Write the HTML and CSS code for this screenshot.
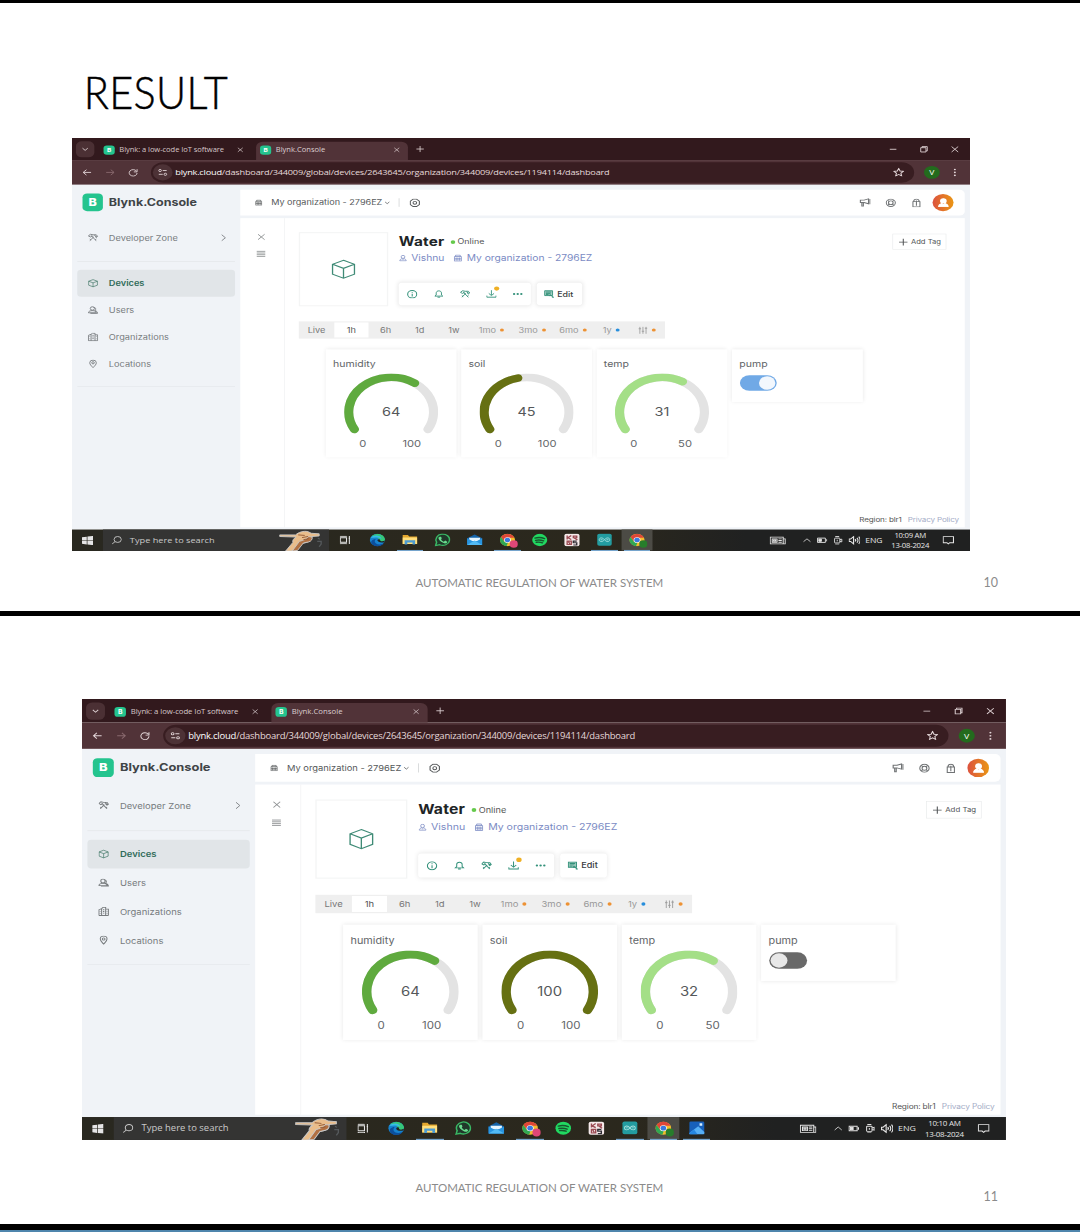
FILE: index.html
```html
<!DOCTYPE html>
<html lang="en">
<head>
<meta charset="utf-8">
<title>Automatic Regulation of Water System</title>
<link rel="stylesheet" href="styles.css">
</head>
<body>
<svg class="sprite" aria-hidden="true">
  <symbol id="down" viewBox="0 0 16 16"><path d="M4 6l4 4 4-4"/></symbol>
  <symbol id="right" viewBox="0 0 16 16"><path d="M5 2l6 6-6 6"/></symbol>
  <symbol id="up" viewBox="0 0 16 16"><path d="M2 11l6-6 6 6"/></symbol>
  <symbol id="close" viewBox="0 0 16 16"><path d="M3 3l10 10M13 3L3 13"/></symbol>
  <symbol id="plus" viewBox="0 0 16 16"><path d="M8 2v12M2 8h12"/></symbol>
  <symbol id="min" viewBox="0 0 16 16"><path d="M3 8h10"/></symbol>
  <symbol id="restore" viewBox="0 0 16 16"><path d="M3 5h8v8H3zM5 5V3h8v8h-2"/></symbol>
  <symbol id="back" viewBox="0 0 16 16"><path d="M14 8H2M7 3L2 8l5 5"/></symbol>
  <symbol id="forward" viewBox="0 0 16 16"><path d="M2 8h12M9 3l5 5-5 5"/></symbol>
  <symbol id="reload" viewBox="0 0 16 16"><path d="M13 5.500A6 6 0 1 0 14 9M14 2v5H9"/></symbol>
  <symbol id="tune" viewBox="0 0 16 16"><path d="M8 4.500h6M2 11.500h6"/><circle cx="4" cy="4.500" r="2"/><circle cx="12" cy="11.500" r="2"/></symbol>
  <symbol id="star" viewBox="0 0 16 16"><path d="M8 1.500l2 4.500 4.800.5-3.600 3.200 1 4.800L8 12l-4.200 2.500 1-4.800L1.200 6.500 6 6z"/></symbol>
  <symbol id="dots" viewBox="0 0 16 16"><g fill="currentColor" stroke="none"><circle cx="8" cy="2.500" r="1.500"/><circle cx="8" cy="8" r="1.500"/><circle cx="8" cy="13.500" r="1.500"/></g></symbol>
  <symbol id="more" viewBox="0 0 16 16"><g fill="currentColor" stroke="none"><circle cx="2.500" cy="8" r="1.800"/><circle cx="8" cy="8" r="1.800"/><circle cx="13.500" cy="8" r="1.800"/></g></symbol>
  <symbol id="tools" viewBox="0 0 16 16"><path d="M1 5l3-3 4 1h5l2 3-2 2-2-2M1 5l3 2 3-2M9 7l-6 7M7 7l6 7M5 4l3 4M10 4l4 3M3 11l2 2M11 13l2-2"/></symbol>
  <symbol id="cube" viewBox="0 0 24 24"><path d="M12 2l10 4.500v11L12 22 2 17.500v-11zM2 6.500L12 11l10-4.500M12 11v11"/></symbol>
  <symbol id="users" viewBox="0 0 16 16"><circle cx="7" cy="5" r="3.200"/><path d="M1 13c0-3 3-4 6-4s6 1 6 4zM9 3c2 0 3 1 3 3s-1 2-1 3c3 1 4 3 4 5H4"/></symbol>
  <symbol id="building" viewBox="0 0 16 16"><path d="M1 15V5l4-2v12M5 3l2-2h4v14M11 4h4v11M1 15h14M7 5h2M7 8h2M7 11h2M13 7v1M13 11v1M3 7v1M3 11v1"/></symbol>
  <symbol id="pin" viewBox="0 0 16 16"><path d="M8 15C5 11 3 9 3 6a5 5 0 0 1 10 0c0 3-2 5-5 9z"/><circle cx="8" cy="6" r="2"/></symbol>
  <symbol id="case" viewBox="0 0 16 16"><path d="M2 5h12v10H2zM4 5V2h8v3M5 7v7M8 7v7M11 7v7M2 10h12"/></symbol>
  <symbol id="gear" viewBox="0 0 16 16"><path d="M5.500 1.500h5L14.500 5v6l-4 3.500h-5L1.500 11V5z"/><circle cx="8" cy="8" r="2.600"/></symbol>
  <symbol id="horn" viewBox="0 0 16 16"><path d="M2 4h5l6-2v8L7 8H2zM4 8v6h2V8M15 2v9"/></symbol>
  <symbol id="ring" viewBox="0 0 16 16"><circle cx="8" cy="8" r="6.500"/><circle cx="8" cy="8" r="3.300"/><path d="M3.500 3.500l2.200 2.200M12.500 3.500l-2.200 2.200M3.500 12.500l2.200-2.200M12.500 12.500l-2.200-2.200"/></symbol>
  <symbol id="gift" viewBox="0 0 16 16"><path d="M3 6h10v9H3zM4 6c0-6 8-6 8 0M8 4v9"/></symbol>
  <symbol id="list" viewBox="0 0 16 16"><path d="M1 3h14M1 6.300h14M1 9.600h14M1 13h14"/></symbol>
  <symbol id="person" viewBox="0 0 16 16"><circle cx="8" cy="5" r="3.500"/><path d="M2 14c0-3 2-4 4-5l2 2 2-2c2 1 4 2 4 5z"/></symbol>
  <symbol id="info" viewBox="0 0 16 16"><circle cx="8" cy="8" r="6.500"/><path d="M8 7v5M8 4v1.500"/></symbol>
  <symbol id="bell" viewBox="0 0 16 16"><path d="M2 12l2-2V6c0-5 8-5 8 0v4l2 2zM6 14h4"/></symbol>
  <symbol id="download" viewBox="0 0 16 16"><path d="M8 1v9M4 7l4 4 4-4M1 11v3h14v-3"/></symbol>
  <symbol id="edit" viewBox="0 0 16 16"><path fill="currentColor" fill-opacity=".45" d="M1 2h12v9H1z"/><path d="M3 4.500h8M3 7h7M3 9h4M9 9l5 5M9 9v3M15 14h-3"/></symbol>
  <symbol id="sliders" viewBox="0 0 16 16"><path d="M3 1v14M8 1v14M13 1v14M1 5h4M6 10h4M11 4h4"/></symbol>
  <symbol id="windows" viewBox="0 0 16 16"><path fill="currentColor" stroke="none" d="M0 2.200L7 1.200v6.300H0zM8 1l8-1v7.500H8zM0 8.500h7v6.300L0 13.800zM8 8.500h8V16l-8-1z"/></symbol>
  <symbol id="search" viewBox="0 0 16 16"><circle cx="9.500" cy="6.500" r="5.500"/><path d="M5.500 10.500L1 15"/></symbol>
  <symbol id="taskview" viewBox="0 0 16 16"><path d="M1 4h9v8H1zM1 1v1M10 1v1M1 14v2M10 14v2M1 1.500h9M1 14.500h9M14 1v14M13 5h2"/></symbol>
  <symbol id="news" viewBox="0 0 24 16"><path d="M1 2h19v12H1zM20 5h3v9h-3M4 5h7v6H4zM13 5h5M13 8h5M13 11h5M6 7h3v2H6z"/></symbol>
  <symbol id="battery" viewBox="0 0 16 16"><path d="M1 4h12v8H1zM15 6v4"/><path fill="currentColor" d="M3 6h4v4H3z"/></symbol>
  <symbol id="meet" viewBox="0 0 16 16"><rect x="3" y="4" width="8" height="9" rx="1"/><path d="M11 7l3-1v5l-3-1M4 1h6M4 15.500h6M7 7v3"/></symbol>
  <symbol id="volume" viewBox="0 0 16 16"><path d="M1 6h2l4-4v12l-4-4H1zM9 6c1 1 1 3 0 4M11.500 4c2 2 2 6 0 8M14 2c2.500 3 2.500 9 0 12"/></symbol>
  <symbol id="note" viewBox="0 0 16 16"><path d="M1 2h14v10h-5l-2 2-2-2H1z"/></symbol>
  <symbol id="hand" viewBox="0 0 70 40"><path fill="#e9bd8b" d="M4 10h24c5-5 12-8 19-6l5 3 12 1v4l-11 1c1 5-3 9-8 11l-7 2-9 14H13l11-16c-1-4 1-7 5-10L4 13z"/><path fill="#b27142" d="M31 39l9-14 8-2c4-1 6-5 5-9l-5-1c-3 5-8 7-14 9L23 40z"/><path fill="none" stroke="#8f5632" d="M32 10l10 1M38 15l9-2M40 19l8-2"/><path fill="none" stroke="#55595c" stroke-width="2" d="M62 16l3 2M61 22h6v5l-3 5"/></symbol>
  <symbol id="edge" viewBox="0 0 24 24"><g stroke="none"><circle cx="12" cy="12" r="11" fill="#1683cf"/><path fill="#36c779" d="M3 6c5-7 18-6 20 4 1 5-5 7-9 4 2-5-4-9-11-8z"/><path fill="#35bbe9" d="M2 8C7 2 17 3 18 10c-5-4-11-2-16-2z"/><path fill="#0c4f9d" d="M10 10c-4 4-1 10 5 10 3 0 5-1 6-2-3 7-13 7-17 1-3-5 1-9 6-9z"/><path fill="#202420" d="M12 12c1-2 4-2 4 0 0 3 4 3 7 1l-1 3c-5 1-10 0-10-4z"/></g></symbol>
  <symbol id="explorer" viewBox="0 0 24 24"><g stroke="none"><path fill="#e3a72e" d="M1 3h8l2 3h12v14H1z"/><path fill="#ffdf7d" d="M1 8h22v12H1z"/><path fill="#4c9bd2" d="M4 13h16v8h-4v-4H8v4H4z"/></g></symbol>
  <symbol id="whatsapp" viewBox="0 0 24 24"><path fill="#20382a" stroke="#39b764" stroke-width="2.200" d="M2 22l1.500-6A10 10 0 1 1 8 20.500z"/><path fill="#6bdc8e" stroke="none" d="M8 6l2 0 1 3-1 2c1 2 2 3 4 4l2-2 3 2c0 3-3 4-6 2-4-2-7-6-7-9z"/></symbol>
  <symbol id="mail" viewBox="0 0 24 24"><g stroke="none"><path fill="#1463a8" d="M1 9L12 2l11 7v12H1z"/><path fill="#e5f5ff" d="M4 8h16v6H4z"/><path fill="#2894df" d="M1 9l11 7 11-7v12H1z"/><path fill="#52baf4" d="M1 21l11-8 11 8z"/></g></symbol>
  <symbol id="chrome" viewBox="0 0 24 24"><g stroke="none"><circle cx="12" cy="12" r="11" fill="#f2bd2d"/><path fill="#df4638" d="M2.500 6.500A11 11 0 0 1 22 8H12L7 14z"/><path fill="#31a853" d="M2.500 6.500l5 8.500 5 2-2 6A11 11 0 0 1 2.500 6.500z"/><circle cx="12" cy="12" r="5" fill="#fff"/><circle cx="12" cy="12" r="4" fill="#3b79df"/></g></symbol>
  <symbol id="spotify" viewBox="0 0 24 24"><circle cx="12" cy="12" r="11" fill="#21d861" stroke="none"/><path fill="none" stroke="#17562e" stroke-width="2.400" stroke-linecap="round" d="M5 8.500c5-1.500 10-1 14 1M6 12.500c4-1 8-.7 11.500 1M7 16c3.500-.7 6-.4 9 1"/></symbol>
  <symbol id="arcade" viewBox="0 0 24 24"><rect x="1" y="1" width="22" height="22" rx="3" fill="#f5eaea" stroke="none"/><path fill="none" stroke="#9a4a52" stroke-width="2" d="M5 4v7M11 4L6 8l5 3M14 5h5v3h-5zM15 8l5 4M5 14h6v6H5zM7 15l2 4"/><path fill="none" stroke="#302d34" stroke-width="2" d="M19 14h-5v3h5v4h-5"/></symbol>
  <symbol id="arduino" viewBox="0 0 24 24"><rect x="1" y="1" width="22" height="22" rx="3" fill="#239ca0" stroke="none"/><path fill="none" stroke="#a2dfdd" stroke-width="1.500" d="M12 12c-3-5-8-4-8 0s5 5 8 0c3-5 8-4 8 0s-5 5-8 0M6 12h3M15 12h3"/></symbol>
  <symbol id="photos" viewBox="0 0 24 24"><g stroke="none"><rect x="1" y="1" width="22" height="22" rx="2" fill="#1760bb"/><path fill="#56aff5" d="M1 21L14 9l9 10v4H1z"/><path fill="#2587e2" d="M8 15l5 8H1v-2z"/><path fill="#d8efff" d="M16 4h4v4h-4z"/></g></symbol>
</svg>

<main class="deck">
  <section class="slide slide-first">
    <h1>RESULT</h1>
    <div class="shot shot-a" data-shot="0"></div>
    <footer><span></span><p>AUTOMATIC REGULATION OF WATER SYSTEM</p><b>10</b></footer>
  </section>
  <section class="slide slide-second">
    <div class="shot shot-b" data-shot="1"></div>
    <footer><span></span><p>AUTOMATIC REGULATION OF WATER SYSTEM</p><b>11</b></footer>
  </section>
</main>
<script src="app.js"></script>
</body>
</html>
```
FILE: styles.css
```css
* { box-sizing: border-box; }
body { margin: 0; background: #fff; }
h1, h2, p { margin: 0; font-weight: 400; }
.sprite { position: absolute; width: 0; height: 0; }
svg { display: block; flex: none; }
.icon { fill: none; stroke: currentColor; stroke-width: 1.5; }

/* Slides */
.deck { width: 1080px; height: 1232px; overflow: hidden; border-bottom: 2px solid #4f86ad; }
.slide { display: flex; flex-direction: column; border-bottom: 5px solid #000; }
.slide-first { height: 616px; border-top: 3px solid #000; }
.slide-second { height: 614px; border-bottom-width: 6px; padding-top: 83px; }
.slide h1 { height: 135px; padding: 62px 0 0 91px; font: 300 45px/54px Lato, sans-serif; letter-spacing: 0.4px; color: #000; transform: scaleX(0.92); transform-origin: 0 0; -webkit-text-stroke: 0.5px #000; }
.shot { overflow: hidden; flex: none; }
.shot-a { width: 898px; height: 413px; margin-left: 72px; }
.shot-b { width: 924px; height: 441px; margin-left: 82px; }
.slide footer { display: grid; grid-template-columns: 1fr auto 1fr; padding: 23px 82px 0 81px; font: 12.2px/18px Lato, sans-serif; color: #8b8b8b; }
.slide footer p { transform: scaleX(0.943); }
.slide footer b { font-weight: 400; font-size: 12.5px; text-align: right; }
.slide-second footer { padding-top: 39px; }
.slide-second footer b { padding-top: 9px; }

/* Desktop, 1366 x 768, squeezed into the slide */
.desktop { width: 1366px; height: 768px; display: flex; flex-direction: column; transform-origin: 0 0; font-family: Inter, sans-serif; color: #555; }
.shot-a .desktop { transform: scale(0.6574, 0.5378); }
.shot-b .desktop { transform: scale(0.6764, 0.5742); }

/* Browser */
.tabs { height: 41px; display: flex; align-items: center; background: #32191d; color: #dccfd1; font: 12px/20px "Open Sans", sans-serif; padding-left: 6px; }
.tabs .drop { width: 28px; height: 30px; border-radius: 9px; background: #4b3034; display: grid; place-items: center; }
.fav { width: 17px; height: 17px; border-radius: 5px; background: #24c48e; color: #fff; font: 700 10px/17px Inter, sans-serif; text-align: center; flex: none; }
.tab { height: 34px; align-self: flex-end; display: flex; align-items: center; border-radius: 10px 10px 0 0; padding-bottom: 4px; }
.tab-one { width: 246px; padding-left: 14px; padding-right: 18px; }
.tab-one span { margin-left: 7px; white-space: nowrap; color: #d5c6c8; font-size: 11.5px; letter-spacing: -0.1px; }
.tab-one .icon { margin-left: auto; }
.tab-on { width: 231px; background: #513338; padding-left: 6px; padding-right: 11px; }
.tab-on span { margin-left: 7px; font-size: 11.5px; }
.tab-on .icon { margin-left: auto; }
.tabs .add { margin-left: 11px; }
.controls { margin-left: auto; display: flex; gap: 31px; padding-right: 15px; }
.tools { height: 46px; display: flex; align-items: center; background: #513338; color: #e2d5d7; padding-left: 15px; border-bottom: 1px solid #7a6165; }
.tools > .icon { margin-right: 19px; }
.tools > .dim { color: #89696e; }
.address { width: 1161px; height: 38px; border-radius: 19px; background: #381d21; display: flex; align-items: center; padding: 0 15px 0 3px; font: 14px/20px "Open Sans", sans-serif; }
.site { width: 30px; height: 30px; border-radius: 15px; background: #4d3236; display: grid; place-items: center; }
.address span { margin-left: 4px; letter-spacing: -0.33px; color: #e5d9da; white-space: nowrap; }
.address b { font-weight: 400; color: #fff; }
.address > .icon { margin-left: auto; }
.profile { width: 24px; height: 24px; border-radius: 50%; background: #236b1d; color: #fff; font: 13px/24px "Open Sans", sans-serif; text-align: center; margin: 0 15px; }
.tools > .kebab { margin-right: 0; }

/* Console */
.console { height: 641px; display: flex; background: #f0f3f7; }
.side { width: 256px; padding: 16px 8px 0; }
.brand { display: flex; align-items: center; gap: 9px; padding-left: 8px; font-weight: 700; font-size: 19px; color: #3f4447; }
.brand i { width: 31px; height: 33px; border-radius: 7px; background: #24c48e; color: #fff; font: 800 19px/33px Inter, sans-serif; text-align: center; }
.item { height: 50px; display: flex; align-items: center; padding: 0 10px 0 16px; gap: 16px; font-size: 14px; color: #777b7e; }
.item .chev { margin-left: auto; }
.item.zone { margin-top: 24px; }
.item.on { background: #e1e5e8; color: #2f6b58; font-weight: 600; border-radius: 6px; margin-top: 15px; }
.zone-line { border-bottom: 1px solid #dfe3e6; height: 20px; }
.end-line { border-bottom: 1px solid #e1e5e8; height: 18px; }
.work { width: 1102px; padding-top: 9px; }
.bar { height: 48px; background: #fff; border-radius: 0 8px 8px 0; display: flex; align-items: center; padding: 0 17px 0 22px; font-size: 13.8px; color: #55585a; }
.bar .org { margin: 0 1px 0 13px; white-space: nowrap; }
.bar .line { height: 16px; border-left: 1px solid #c9cccd; margin: 0 15px 0 11px; }
.bar .right { margin-left: auto; display: flex; align-items: center; gap: 22px; color: #707375; }
.face { width: 32px; height: 32px; border-radius: 50%; background: linear-gradient(90deg, #dc523f, #ea9614); display: grid; place-items: center; color: #fff; margin-left: -6px; }
.face .icon { fill: #fff; }
.panel { height: 575px; margin-top: 5px; background: #fff; display: flex; }
.rail { width: 68px; border-right: 1px solid #eff0f1; display: flex; flex-direction: column; align-items: center; padding: 27px 4px 0 0; gap: 16px; color: #8e9193; }
.body { flex: 1; padding: 26px 9px 0 21px; display: flex; flex-direction: column; }
.device { height: 138px; display: flex; }
.picture { width: 136px; height: 138px; border: 2px solid #f4f5f5; color: #3f8b76; display: grid; place-items: center; }
.picture .icon { stroke-width: 1.2; }
.about { margin-left: 16px; padding-top: 3px; }
.name { height: 30px; display: flex; align-items: center; font-size: 13.5px; }
.name h2 { font: 700 23.3px/30px Inter, sans-serif; letter-spacing: 0.3px; color: #202426; margin-right: 9px; }
.name i { width: 7px; height: 7px; border-radius: 4px; background: #65c94b; margin-right: 4px; }
.owner { height: 30px; display: flex; align-items: center; color: #7b8bc4; font-size: 15.6px; white-space: nowrap; }
.owner span { margin: 0 14px 0 6px; }
.buttons { display: flex; gap: 9px; margin-top: 31px; }
.group { display: flex; align-items: center; height: 42px; border-radius: 5px; background: #fff; box-shadow: 0 0 8px rgba(0, 0, 0, 0.1); color: #33917a; }
.five { width: 201px; padding: 0 12px; justify-content: space-between; }
.down { position: relative; }
.down::after { content: ""; position: absolute; right: -4px; top: -6px; width: 8px; height: 8px; border-radius: 4px; background: #efb025; }
.edit { padding: 0 9px 0 11px; gap: 4px; width: 69px; font-size: 13.5px; font-weight: 500; }
.edit span { color: #3a3d3f; }
.tag { margin: 3px 19px 0 auto; width: 82px; height: 30px; border: 1px solid #e8eaeb; display: flex; align-items: center; justify-content: center; gap: 3px; font-size: 11.6px; color: #515456; white-space: nowrap; }
.range { width: 557px; height: 32px; margin-top: 28px; background: #efefef; display: flex; align-items: center; font-size: 14px; color: #777; }
.range span { height: 28px; display: flex; align-items: center; justify-content: center; gap: 6px; width: 52px; }
.range .live { width: 54px; }
.range .on { background: #fff; color: #555; }
.range .wide { width: 62px; color: #999; }
.range .mid { width: 54px; color: #999; }
.range i { width: 6px; height: 6px; border-radius: 3px; background: #ed9234; }
.range .blue { background: #278edc; }
.cards { display: flex; align-items: flex-start; gap: 7px; margin: 20px 0 0 41px; }
.card { width: 199px; height: 201px; background: #fff; box-shadow: 0 0 7px rgba(0, 0, 0, 0.1); padding: 17px 11px 0; font-size: 16px; color: #626568; line-height: 20px; }
.gauge { display: grid; margin: 8px 0 0 17px; width: 143px; }
.gauge svg, .gauge b { grid-area: 1 / 1; }
.gauge path { fill: none; stroke-width: 14; stroke-linecap: round; }
.gauge b { font: 400 22px/26px Inter, sans-serif; place-self: center; padding-top: 29px; color: #55585a; }
.scale { width: 94px; margin: 8px 0 0 40px; display: flex; justify-content: space-between; font-size: 17px; }
.pump { height: 98px; }
.toggle { width: 56px; height: 29px; border-radius: 15px; background: #70a9e6; display: flex; justify-content: flex-end; padding: 2px; margin: 11px 0 0 1px; }
.toggle i { width: 25px; height: 25px; border-radius: 50%; background: #f2f7fd; }
.toggle.off { background: #696969; justify-content: flex-start; }
.toggle.off i { background: #e8e8e8; }
.region { margin-top: auto; padding-bottom: 3px; font-size: 12.3px; line-height: 22px; text-align: right; letter-spacing: -0.25px; }
.region span { color: #a5adc7; margin-left: 6px; }

/* Taskbar */
.taskbar { height: 40px; display: flex; align-items: center; background: linear-gradient(90deg, #292820, #2b281d 60%, #202121 75%); color: #e5e5e5; font: 13px/16px "Open Sans", sans-serif; }
.start { width: 47px; display: grid; place-items: center; }
.search { width: 344px; height: 40px; background: #343433; display: flex; align-items: center; padding: 0 9px 0 13px; font-size: 14px; color: #c9c9c9; }
.search span { margin-left: 12px; white-space: nowrap; }
.search .hand { margin-left: auto; }
.app { width: 49.3px; height: 40px; display: grid; place-items: center; border-bottom: 2px solid transparent; }
.app.open { border-image: linear-gradient(90deg, transparent 5px, #76a5cd 5px, #76a5cd 44px, transparent 44px) 1; }
.app.active { background: linear-gradient(#4c4b45, #4c4b45) center / 47px 40px no-repeat; }
.badge { position: relative; }
.badge::after { content: ""; position: absolute; right: -3px; bottom: -2px; width: 12px; height: 14px; border-radius: 6px; background: #df4778; }
.badge.green::after { background: #277d2b; }
.tray { display: flex; align-items: center; margin-left: auto; }
.tray > .icon { margin-right: 8px; }
.tray > .newspaper { margin-right: 25px; }
.clock { width: 66px; margin: 0 16px 0 9px; font-size: 11.8px; text-align: center; line-height: 18px; white-space: nowrap; letter-spacing: -0.4px; }
.tray > .bubble { margin-right: 24px; }
```
FILE: app.js
```js
const icon = (name, w, h = w, cls = "") =>
  `<svg class="icon ${cls}" width="${w}" height="${h}"><use href="#${name}"/></svg>`;

// Point on the gauge circle; the dial runs 240 degrees, starting at the lower left.
function point(share) {
  const a = (210 - 240 * share) * Math.PI / 180;
  return `${(71.5 + 64.5 * Math.cos(a)).toFixed(1)} ${(71.5 - 64.5 * Math.sin(a)).toFixed(1)}`;
}
function arc(share, color) {
  return `<path stroke="${color}" d="M${point(0)}A64.5 64.5 0 ${share > 0.75 ? 1 : 0} 1 ${point(share)}"/>`;
}
function card(g) {
  return `<div class="card">${g.name}
    <div class="gauge"><svg width="143" height="113">${arc(1, "#e3e3e3")}${arc(g.value / g.max, g.color)}</svg><b>${g.value}</b></div>
    <div class="scale"><span>0</span><span>${g.max}</span></div></div>`;
}
function desktop(s) {
  const gauges = [
    { name: "humidity", value: s.humidity, max: 100, color: "#5faa3e" },
    { name: "soil", value: s.soil, max: 100, color: "#667012" },
    { name: "temp", value: s.temp, max: 50, color: "#a4df87" }
  ];
  return `<div class="desktop">
  <div class="tabs"><div class="drop">${icon("down", 16)}</div>
    <div class="tab tab-one"><i class="fav">B</i><span>Blynk: a low-code IoT software</span>${icon("close", 12)}</div>
    <div class="tab tab-on"><i class="fav">B</i><span>Blynk.Console</span>${icon("close", 12)}</div>
    ${icon("plus", 15, 15, "add")}
    <div class="controls">${icon("min", 16)}${icon("restore", 16)}${icon("close", 16)}</div></div>
  <div class="tools">${icon("back", 16)}${icon("forward", 16, 16, "dim")}${icon("reload", 16)}
    <div class="address"><div class="site">${icon("tune", 16)}</div><span><b>blynk.cloud</b>/dashboard/344009/global/devices/2643645/organization/344009/devices/1194114/dashboard</span>${icon("star", 17)}</div>
    <div class="profile">V</div>${icon("dots", 16, 16, "kebab")}</div>
  <div class="console">
    <nav class="side"><div class="brand"><i>B</i>Blynk.Console</div>
      <div class="item zone">${icon("tools", 16)}Developer Zone${icon("right", 15, 15, "chev")}</div><div class="zone-line"></div>
      <div class="item on">${icon("cube", 16, 18)}Devices</div>
      <div class="item">${icon("users", 16)}Users</div>
      <div class="item">${icon("building", 16)}Organizations</div>
      <div class="item">${icon("pin", 16)}Locations</div><div class="end-line"></div></nav>
    <div class="work">
      <div class="bar">${icon("case", 12)}<span class="org">My organization - 2796EZ</span>${icon("down", 13)}<i class="line"></i>${icon("gear", 17)}
        <div class="right">${icon("horn", 18)}${icon("ring", 17)}${icon("gift", 17)}<div class="face">${icon("person", 19)}</div></div></div>
      <div class="panel"><div class="rail">${icon("close", 16)}${icon("list", 15)}</div>
        <div class="body">
          <div class="device"><div class="picture">${icon("cube", 40, 42)}</div>
            <div class="about"><div class="name"><h2>Water</h2><i></i>Online</div>
              <div class="owner">${icon("person", 13)}<span>Vishnu</span>${icon("case", 14)}<span>My organization - 2796EZ</span></div>
              <div class="buttons"><div class="group five">${icon("info", 17)}${icon("bell", 16)}${icon("tools", 16)}<div class="down">${icon("download", 16)}</div>${icon("more", 16)}</div>
                <div class="group edit">${icon("edit", 16)}<span>Edit</span></div></div></div>
            <div class="tag">${icon("plus", 17)}Add Tag</div></div>
          <div class="range"><span class="live">Live</span><span class="on">1h</span><span>6h</span><span>1d</span><span>1w</span>
            <span class="wide">1mo<i></i></span><span class="wide">3mo<i></i></span><span class="wide">6mo<i></i></span>
            <span class="mid">1y<i class="blue"></i></span><span class="mid">${icon("sliders", 15)}<i></i></span></div>
          <div class="cards">${gauges.map(card).join("")}<div class="card pump">pump<div class="toggle ${s.pump ? "" : "off"}"><i></i></div></div></div>
          <div class="region">Region: blr1 <span>Privacy Policy</span></div>
        </div></div></div></div>
  <div class="taskbar"><div class="start">${icon("windows", 17)}</div>
    <div class="search">${icon("search", 16)}<span>Type here to search</span>${icon("hand", 70, 40, "hand")}</div>
    <div class="app">${icon("taskview", 17)}</div><div class="app">${icon("edge", 25)}</div>
    <div class="app open">${icon("explorer", 24)}</div><div class="app">${icon("whatsapp", 25)}</div>
    <div class="app">${icon("mail", 25)}</div><div class="app open"><div class="badge">${icon("chrome", 25)}</div></div>
    <div class="app">${icon("spotify", 25)}</div><div class="app">${icon("arcade", 25)}</div>
    <div class="app open">${icon("arduino", 24)}</div><div class="app open active"><div class="badge green">${icon("chrome", 25)}</div></div>
    ${s.photos ? `<div class="app open">${icon("photos", 24)}</div>` : ""}
    <div class="tray">${icon("news", 25, 19, "newspaper")}${icon("up", 14)}${icon("battery", 16)}${icon("meet", 16)}${icon("volume", 18)}ENG
      <div class="clock">${s.time}<br>13-08-2024</div>${icon("note", 18, 20, "bubble")}</div></div>
  </div>`;
}

const states = [
  { humidity: 64, soil: 45, temp: 31, pump: true, time: "10:09 AM", photos: false },
  { humidity: 64, soil: 100, temp: 32, pump: false, time: "10:10 AM", photos: true }
];
document.querySelectorAll("[data-shot]").forEach(el => {
  el.innerHTML = desktop(states[el.dataset.shot]);
});
```
